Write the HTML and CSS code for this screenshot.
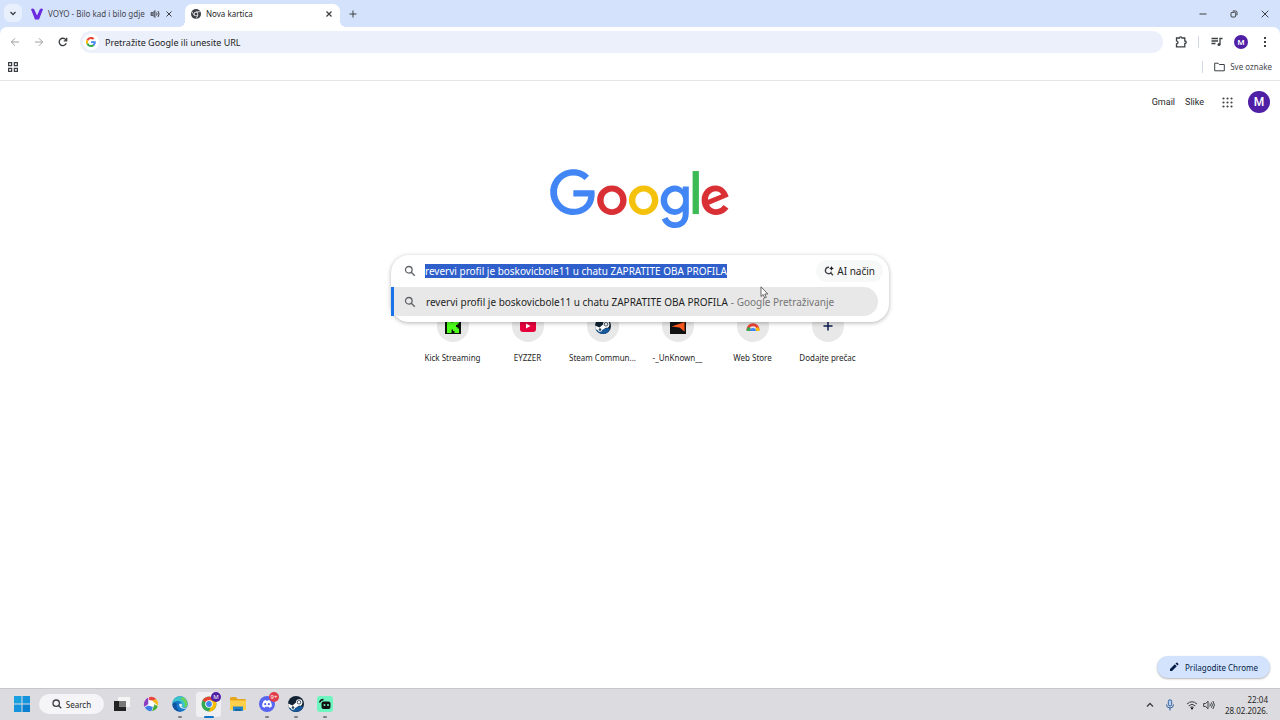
FILE: index.html
```html
<!DOCTYPE html>
<html lang="hr">
<head>
    <meta charset="UTF-8">
    <meta name="viewport" content="width=device-width, initial-scale=1.0">
    <title>Nova kartica</title>
    <link rel="stylesheet" href="styles.css">
</head>
<body>
    <header class="browser">
        <div class="tab-strip">
            <button class="tab-search" aria-label="Pretraži kartice">
                <svg width="8" height="8" viewBox="0 0 8 8"><path d="M1.500 3l2.500 2.500L6.500 3" class="line bold"/></svg>
            </button>
            <div class="tab">
                <svg width="12" height="12" viewBox="0 0 12 12"><path d="M0 1.200Q1.500-.3 3 1l3 6.500L9 1q1.500-1.300 3 .2L8 11.500H4z" fill="#6a2be0"/></svg>
                <span class="tab-title">VOYO - Bilo kad i bilo gdje</span>
                <svg class="tab-sound" width="10" height="10" viewBox="0 0 10 10"><path d="M1 3.500h2L5 1.500v7L3 6.500H1z" fill="#7c8494" stroke="#44474e" stroke-width=".8"/><path d="M6.500 3.500q1.200 1.500 0 3M8 2q2.200 3 0 6" class="line"/></svg>
                <button class="close" aria-label="Zatvori"><svg width="8" height="8" viewBox="0 0 8 8"><path d="M1.500 1.500l5 5M6.500 1.500l-5 5" class="line"/></svg></button>
            </div>
            <div class="tab active">
                <svg width="10" height="10" viewBox="0 0 20 20"><circle cx="10" cy="10" r="10" fill="#3c4043"/><path d="M10 5.500h8M6 12.500L2 5.500M14 12.500l-4 7" stroke="#fff" stroke-width="1.500"/><circle cx="10" cy="10" r="4.500" fill="#fff"/><circle cx="10" cy="10" r="3" fill="#3c4043"/></svg>
                <span class="tab-title">Nova kartica</span>
                <button class="close" aria-label="Zatvori"><svg width="8" height="8" viewBox="0 0 8 8"><path d="M1.500 1.500l5 5M6.500 1.500l-5 5" class="line bold"/></svg></button>
            </div>
            <button class="new-tab" aria-label="Nova kartica"><svg width="8" height="8" viewBox="0 0 8 8"><path d="M4 .5v7M.5 4h7" class="line"/></svg></button>
            <div class="window-buttons">
                <button aria-label="Minimiziraj"><svg width="8" height="8" viewBox="0 0 8 8"><path d="M.5 4h7" class="line"/></svg></button>
                <button aria-label="Vrati"><svg width="8" height="8" viewBox="0 0 8 8"><rect x="1" y="2.300" width="4.700" height="4.700" rx="1" class="line"/><path d="M2.800 1h2.700Q7 1 7 2.500v2.700" class="line"/></svg></button>
                <button aria-label="Zatvori"><svg width="8" height="8" viewBox="0 0 8 8"><path d="M.7 .7l6.600 6.600M7.300 .7L.7 7.300" class="line"/></svg></button>
            </div>
        </div>
        <div class="toolbar">
            <button class="nav muted" aria-label="Natrag"><svg width="10" height="10" viewBox="0 0 10 10"><path d="M9 5H1.500M5 1.300L1.300 5 5 8.700" class="line"/></svg></button>
            <button class="nav muted" aria-label="Naprijed"><svg width="10" height="10" viewBox="0 0 10 10"><path d="M1 5h7.500M5 1.300L8.700 5 5 8.700" class="line"/></svg></button>
            <button class="nav" aria-label="Osvježi"><svg width="10" height="10" viewBox="0 0 10 10"><path d="M8.300 6.300A3.700 3.700 0 1 1 7.800 2.700L8.500 3.500M8.700 .8v3H5.800" class="line bold"/></svg></button>
            <div class="omnibox">
                <span class="g-badge"><svg width="10" height="10" viewBox="0 0 48 48"><path fill="#ea4335" d="M24 9.500c3.500 0 6.700 1.200 9.200 3.600l6.900-6.900C35.900 2.400 30.500 0 24 0 14.600 0 6.500 5.400 2.600 13.200l8 6.200C12.400 13.700 17.700 9.500 24 9.500z"/><path fill="#4285f4" d="M47 24.500c0-1.600-.2-3.100-.4-4.500H24v9h12.900c-.6 3-2.200 5.500-4.700 7.200l7.700 6C44.400 38 47 31.800 47 24.500z"/><path fill="#fbbc05" d="M10.500 28.600a14.500 14.500 0 0 1 0-9.200l-8-6.200a24 24 0 0 0 0 21.600z"/><path fill="#34a853" d="M24 48c6.500 0 11.900-2.100 15.900-5.800l-7.700-6c-2.200 1.500-4.900 2.300-8.200 2.300-6.300 0-11.600-4.200-13.500-9.900l-8 6.200C6.500 42.600 14.600 48 24 48z"/></svg></span>
                <input type="text" aria-label="Adresna traka" placeholder="Pretražite Google ili unesite URL">
            </div>
            <button class="tool extensions" aria-label="Proširenja"><svg width="12" height="12" viewBox="0 0 12 12"><path d="M1.500 2h3q0-1.200 1.200-1.200T7 2h2.800v3q1.400 0 1.400 1.200T9.800 7.500v3.300H1.500V7.900q1.500-.2 1.500-1.500T1.500 4.900z" class="line bold"/></svg></button>
            <span class="divider"></span>
            <button class="tool media" aria-label="Mediji"><svg width="12" height="10" viewBox="0 0 12 10"><path d="M.5 1.500h6.500M.5 4h6.500M.5 6.500h4M9 7.500V1.500h2.500" class="line bold"/><circle cx="8" cy="7.500" r="1.500" fill="#3c4043"/></svg></button>
            <button class="avatar small" aria-label="Profil">M</button>
            <button class="tool menu" aria-label="Izbornik"><svg width="4" height="12" viewBox="0 0 4 12"><circle cx="2" cy="2" r="1"/><circle cx="2" cy="6" r="1"/><circle cx="2" cy="10" r="1"/></svg></button>
        </div>
        <div class="bookmarks">
            <button aria-label="Grupe kartica"><svg width="10" height="10" viewBox="0 0 10 10"><path d="M.6 .6h3v3h-3zM6.400 .6h3v3h-3zM.6 6.400h3v3h-3zM6.400 6.400h3v3h-3z" class="line bold"/></svg></button>
            <span class="divider"></span>
            <button class="all-bookmarks"><svg width="11" height="10" viewBox="0 0 11 10"><path d="M.7 1.200h3.300l1.300 1.300h5v6.300H.7z" class="line"/></svg>Sve oznake</button>
        </div>
    </header>

    <main class="page">
        <nav class="page-nav">
            <a href="#">Gmail</a>
            <a href="#">Slike</a>
            <button class="apps" aria-label="Aplikacije"><svg width="11" height="11" viewBox="0 0 11 11"><path d="M1.500 1.500h.01M5.500 1.500h.01M9.500 1.500h.01M1.500 5.500h.01M5.500 5.500h.01M9.500 5.500h.01M1.500 9.500h.01M5.500 9.500h.01M9.500 9.500h.01" stroke="#444" stroke-width="2.200" stroke-linecap="round"/></svg></button>
            <button class="avatar" aria-label="Google račun">M</button>
        </nav>

        <svg class="logo" width="180" height="61" viewBox="0 0 272 92" role="img" aria-label="Google">
            <path fill="#4285f4" d="M35.290 41.410V32h31.710c.31 1.640.47 3.580.47 5.680 0 7.060-1.930 15.790-8.150 22.010-6.050 6.300-13.780 9.660-24.020 9.660C16.320 69.350.36 53.890.36 34.910.36 15.930 16.320.47 35.300.47c10.500 0 17.980 4.120 23.600 9.490l-6.640 6.640c-4.030-3.780-9.490-6.720-16.970-6.720-13.860 0-24.700 11.170-24.700 25.030 0 13.860 10.840 25.030 24.700 25.030 8.990 0 14.110-3.610 17.390-6.890 2.660-2.660 4.410-6.460 5.100-11.650z"/>
            <path fill="#d93036" d="M115.750 47.180c0 12.770-9.990 22.180-22.250 22.180s-22.250-9.410-22.250-22.180C71.250 34.320 81.240 25 93.500 25s22.250 9.320 22.250 22.180zm-9.740 0c0-7.980-5.790-13.440-12.510-13.440S80.990 39.200 80.990 47.180c0 7.900 5.790 13.440 12.510 13.440s12.510-5.550 12.510-13.440z"/>
            <path fill="#f4c20d" d="M163.750 47.180c0 12.770-9.990 22.180-22.250 22.180s-22.250-9.410-22.250-22.180c0-12.860 9.990-22.180 22.250-22.180s22.250 9.320 22.250 22.180zm-9.740 0c0-7.980-5.790-13.440-12.510-13.440s-12.510 5.460-12.510 13.440c0 7.900 5.790 13.440 12.510 13.440s12.510-5.550 12.510-13.440z"/>
            <path fill="#4285f4" d="M209.750 26.340v39.820c0 16.380-9.660 23.070-21.080 23.070-10.750 0-17.220-7.190-19.660-13.070l8.480-3.530c1.510 3.610 5.210 7.870 11.170 7.870 7.310 0 11.840-4.510 11.840-13v-3.190h-.34c-2.180 2.690-6.380 5.040-11.680 5.040-11.090 0-21.250-9.660-21.250-22.090 0-12.520 10.160-22.260 21.250-22.260 5.290 0 9.490 2.350 11.680 4.960h.34v-3.610h9.250zm-8.560 20.920c0-7.810-5.210-13.520-11.840-13.520-6.720 0-12.350 5.710-12.350 13.520 0 7.730 5.630 13.360 12.350 13.360 6.630 0 11.840-5.630 11.840-13.360z"/>
            <path fill="#3cba54" d="M225 3v65h-9.500V3z"/>
            <path fill="#d93036" d="M262.020 54.480l7.560 5.040c-2.440 3.610-8.320 9.830-18.480 9.830-12.600 0-22.010-9.740-22.010-22.180 0-13.190 9.490-22.180 20.920-22.180 11.510 0 17.140 9.160 18.980 14.110l1.010 2.520-29.650 12.280c2.270 4.450 5.800 6.720 10.750 6.720 4.960 0 8.400-2.440 10.920-6.140zm-23.270-7.980l19.820-8.230c-1.090-2.770-4.370-4.700-8.230-4.700-4.950 0-11.840 4.370-11.590 12.930z"/>
        </svg>

        <form class="search-box">
            <div class="search-row">
                <svg class="lens" width="12" height="12" viewBox="0 0 12 12"><circle cx="4.800" cy="4.800" r="3.300" class="line bold"/><path d="M7.300 7.300l3.500 3.500" class="line bold"/></svg>
                <input type="text" id="query" aria-label="Pretraživanje" autocomplete="off" value="revervi profil je boskovicbole11 u chatu ZAPRATITE OBA PROFILA">
                <button type="button" class="ai-mode"><svg width="10" height="10" viewBox="0 0 10 10"><path d="M5 1.300A3.200 3.200 0 1 0 7.500 5.800M6.300 6.500l2.700 2.700" class="line bold"/><path d="M7.500 0q.3 2 2.300 2.400-2 .4-2.300 2.400-.3-2-2.300-2.400Q7.200 2 7.500 0z" fill="#1f1f1f"/></svg>AI način</button>
            </div>
            <button type="button" class="suggestion">
                <svg class="lens" width="12" height="12" viewBox="0 0 12 12"><circle cx="4.800" cy="4.800" r="3.300" class="line bold"/><path d="M7.300 7.300l3.500 3.500" class="line bold"/></svg>
                <span>revervi profil je boskovicbole11 u chatu ZAPRATITE OBA PROFILA</span>
                <span class="source">- Google Pretraživanje</span>
            </button>
        </form>

        <div class="shortcuts">
            <a href="#"><span class="disc"><svg width="16" height="16" viewBox="0 0 16 16"><path fill="#0a140a" d="M0 0h16v16H0z"/><path fill="#4dff1a" d="M2 1h4.500v3.500H8V3h1.500V1H14v4.500h-1.500V7H11v2h1.500v1.500H14V15H9.500v-2H8v-1.500H6.500V15H2z"/></svg></span>Kick Streaming</a>
            <a href="#"><span class="disc"><svg width="16" height="12" viewBox="0 0 16 12"><rect width="16" height="12" rx="3" fill="#e6003c"/><path fill="#fff" d="M6 3.500v5L10.500 6z"/></svg></span>EYZZER</a>
            <a href="#"><span class="disc"><svg width="16" height="16" viewBox="0 0 16 16"><use href="#steam"/></svg></span>Steam Commun...</a>
            <a href="#"><span class="disc"><svg width="16" height="16" viewBox="0 0 16 16"><path fill="#111" d="M0 0h16v16H0z"/><path fill="#ff5a1f" d="M1.500 8.500L14.500 4v9.500L9.500 9.500z"/></svg></span>-_UnKnown__</a>
            <a href="#"><span class="disc"><svg width="14" height="14" viewBox="0 0 14 14"><path d="M1.800 11a5.200 5.200 0 0 1 10.400 0" fill="none" stroke="#ea4335" stroke-width="3"/><path d="M.5 12a6.500 6.500 0 0 1 1.500-4l3 1.500-1 2.500z" fill="#34a853"/><path d="M13.500 12a6.500 6.500 0 0 0-1.500-4l-2.500 1.500.5 2.500z" fill="#fbbc05"/><path d="M4 12a3 3 0 0 1 6 0z" fill="#4285f4"/></svg></span>Web Store</a>
            <a href="#"><span class="disc"><svg width="10" height="10" viewBox="0 0 10 10"><path d="M5 .5v9M.5 5h9" stroke="#0b1d51" stroke-width="1.500"/></svg></span>Dodajte prečac</a>
        </div>

        <button class="customize"><svg width="10" height="10" viewBox="0 0 10 10"><path fill="#041e49" d="M1 9V7l4.800-4.800 2 2L3 9zM6.500 1.500l.8-.8q.5-.4 1 0l1 1q.4.500 0 1l-.8.800z"/></svg>Prilagodite Chrome</button>

        <svg class="cursor" width="9" height="13" viewBox="0 0 9 13"><path d="M1 .8v9.700l2.200-2L4.700 12l1.600-.7L4.800 8h3z" fill="#fff" stroke="#444" stroke-width=".8"/></svg>
    </main>

    <footer class="taskbar">
        <div class="task-items">
            <button class="task start" aria-label="Start"><svg width="16" height="16" viewBox="0 0 16 16"><path fill="#18a0e0" d="M0 0h7.500v7.500H0z"/><path fill="#1593dc" d="M8.500 0H16v7.500H8.500zM0 8.500h7.500V16H0z"/><path fill="#0b7fd0" d="M8.500 8.500H16V16H8.500z"/></svg></button>
            <button class="task-search"><svg width="10" height="10" viewBox="0 0 10 10"><circle cx="4.200" cy="4.200" r="3.200" class="line bold"/><path d="M6.500 6.500L9.300 9.300" class="line bold"/></svg>Search</button>
            <button class="task" aria-label="Prikaz zadataka"><svg width="16" height="16" viewBox="0 0 16 16"><path fill="#f5f5f5" d="M4 1h12v10H4z"/><path fill="#222" d="M0 5h5v5.500h7V15H0z"/><path fill="#777" d="M5 5h7v5.500H5z"/></svg></button>
            <button class="task" aria-label="Picasa"><svg width="16" height="16" viewBox="0 0 16 16"><circle cx="8" cy="8" r="7" fill="#fff"/><path fill="#8b3fc0" d="M5.300 1.500V8L1.500 11A7.300 7.300 0 0 1 5.300 1.500z"/><path fill="#e8453c" d="M6 1.200a7.300 7.300 0 0 1 7 1.600L12 5 6 4z"/><path fill="#f7b61c" d="M13.500 3.200a7.300 7.300 0 0 1 1.500 6.500L9 4.500z"/><path fill="#48ac3b" d="M14.800 10.300A7.300 7.300 0 0 1 9 15.200l2.500-7z"/><path fill="#3f7ee8" d="M8.300 15.300a7.300 7.300 0 0 1-6.500-3.700L5 9.500l5 1.500z"/></svg></button>
            <button class="task open" aria-label="Edge"><svg width="16" height="16" viewBox="0 0 16 16"><circle cx="8" cy="8" r="7.700" fill="#1679cc"/><path fill="#3bc4c9" d="M.5 7.500a7.500 7.500 0 0 1 15 .5c0 3-2.500 4-5 3.500-1.500-.3-1-1.300-.5-2C10.500 7 8.500 5 5.500 5 3 5 1.300 6.200.5 7.500z"/><path fill="#67d45b" d="M10 1a7.500 7.500 0 0 1 5.500 7c0 2.500-1.500 3.500-3.500 3.600C14 8 12 4.500 8.500 3z"/><path fill="#1253a0" d="M5 8c-1.500 3 .5 6.500 4.500 7.300C4 16.500.5 12 .5 8.500 1.500 6.500 4 6 5 8z"/><path fill="#e9f2f8" d="M7 8.500q1.500-2 3 0c.3 1-1 1.500 0 2.700 1.500 1 3.500.8 5 .2-2.500 3-7.500 1-8-2.900z"/></svg></button>
            <button class="task open current" aria-label="Chrome"><svg width="16" height="16" viewBox="0 0 16 16"><circle cx="8" cy="8" r="7.500" fill="#34a853"/><path fill="#ea4335" d="M8 8L1.500 4.300A7.500 7.500 0 0 1 14.500 4.500H8z"/><path fill="#fbbc05" d="M8 4.500h6.500A7.500 7.500 0 0 1 7.600 15.500L11 9.500z"/><circle cx="8" cy="8" r="3.800" fill="#fff"/><circle cx="8" cy="8" r="2.900" fill="#4285f4"/></svg><span class="badge">M</span></button>
            <button class="task" aria-label="Datoteke"><svg width="16" height="16" viewBox="0 0 16 16"><path fill="#e5a51d" d="M0 2.500Q0 1 1.500 1H6l1.500 2H15l1 1v5H0z"/><path fill="#fcd04a" d="M0 4.500h16V14H0z"/><path fill="#2483c9" d="M3 10.500h10V15H3z"/><path fill="#1668a5" d="M5 13h6v2H5z"/></svg></button>
            <button class="task open" aria-label="Discord"><svg width="16" height="16" viewBox="0 0 16 16"><circle cx="8" cy="8" r="8" fill="#5865f2"/><path fill="#fff" d="M4.700 4.700L6.800 4l.4.700h1.600l.4-.7 2.100.7Q13 7.500 12.800 10.500q-1 .9-2.500 1.200l-.6-1H6.300l-.6 1q-1.500-.3-2.500-1.200Q3 7.500 4.700 4.700z"/><circle cx="6.200" cy="8.200" r="1.100" fill="#5865f2"/><circle cx="9.800" cy="8.200" r="1.100" fill="#5865f2"/></svg><span class="badge alert">9+</span></button>
            <button class="task open" aria-label="Steam"><svg width="16" height="16" viewBox="0 0 16 16"><g id="steam"><circle cx="8" cy="8" r="8" fill="#123"/><path fill="#16599c" d="M.8 11.500l4 .5 8-2 2.500 1A8 8 0 0 1 .8 11.500z"/><path fill="#fff" d="M0 7.500l4.500 2L8 6.500a3.200 3.200 0 1 1 3 3.200L7.200 12a2.300 2.300 0 0 1-4.400.3L.6 11z"/><circle cx="11" cy="6.300" r="2.100" fill="#123"/><circle cx="11" cy="6.300" r="1.400" fill="#fff"/><circle cx="5" cy="11.600" r="1.300" fill="#345"/></g></svg></button>
            <button class="task open" aria-label="Kamera"><svg width="16" height="16" viewBox="0 0 16 16"><rect width="16" height="16" rx="3" fill="#6ff5c0"/><rect x="4.500" y="5.500" width="9" height="7.500" rx="2" fill="#111"/><path d="M2.500 6.500Q3.500 3.500 6.500 3.500" fill="none" stroke="#111" stroke-width="1.300"/><circle cx="7.500" cy="9" r="1" fill="#6ff5c0"/><circle cx="11" cy="9" r="1" fill="#6ff5c0"/></svg></button>
        </div>
        <div class="tray">
            <button aria-label="Skrivene ikone"><svg width="8" height="8" viewBox="0 0 8 8"><path d="M1 5.500l3-3 3 3" class="line bold"/></svg></button>
            <button class="mic" aria-label="Mikrofon"><svg width="10" height="12" viewBox="0 0 10 12"><rect x="3.300" y=".8" width="3.400" height="6.200" rx="1.700" fill="#b9d1ee" stroke="#2c5f9e"/><path d="M1.500 5.500q0 3.500 3.500 3.500t3.500-3.500M5 9v2.500" fill="none" stroke="#2c5f9e"/></svg></button>
            <button aria-label="Mreža"><svg width="12" height="10" viewBox="0 0 12 10"><path d="M1 4q5-4.500 10 0M2.700 5.800q3.300-3 6.600 0M4.300 7.500q1.700-1.500 3.400 0" class="line"/><circle cx="6" cy="8.500" r="1"/></svg></button>
            <button aria-label="Zvuk"><svg width="12" height="10" viewBox="0 0 12 10"><path d="M.7 3.500h2L5 1.200v7.600L2.700 6.500h-2z M6.800 3.500q1.200 1.500 0 3M8.300 2.300q2.200 2.700 0 5.400M9.900 1q3 4 0 8" class="line"/></svg></button>
            <time class="clock" datetime="2026-02-28T22:04">22:04<br>28.02.2026.</time>
        </div>
    </footer>

    <script>
        window.onload = function() {
            const query = document.getElementById('query');
            query.focus();
            query.select();
        }
    </script>
</body>
</html>
```

FILE: styles.css
```css
* {
    box-sizing: border-box;
}
body {
    margin: 0;
    min-height: 100vh;
    display: flex;
    flex-direction: column;
    font-family: "Noto Sans", "Open Sans", sans-serif;
    font-size: 8px;
    color: #1f1f1f;
    background-color: white;
}
button, input {
    font: inherit;
    color: inherit;
    background: none;
    border: none;
    padding: 0;
    outline: none;
}
button {
    display: flex;
    align-items: center;
    justify-content: center;
    cursor: pointer;
}
a {
    color: inherit;
    text-decoration: none;
}
svg {
    flex-shrink: 0;
}
.line {
    fill: none;
    stroke: #3c4043;
    stroke-width: 1;
}
.line.bold {
    stroke-width: 1.3;
}
.lens .line {
    stroke: #5f6368;
}

/* browser window */
.browser {
    background-color: #d5e2fb;
}
.tab-strip {
    display: flex;
    height: 27px;
    padding-left: 4px;
}
.tab-search {
    width: 18px;
    height: 18px;
    margin-top: 4px;
    border-radius: 6px;
    background-color: #e8f0fd;
}
.tab {
    position: relative;
    display: flex;
    align-items: center;
    width: 154px;
    margin-left: 4px;
    padding: 0 6px 0 5px;
    gap: 5px;
    color: #44474e;
}
.tab-title {
    white-space: nowrap;
}
.tab .close {
    width: 10px;
    height: 10px;
    margin-left: auto;
}
.tab.active {
    width: 155px;
    margin: 4px 0 0 5px;
    padding-bottom: 4px;
    padding-left: 6px;
    border-radius: 7px 7px 0 0;
    color: #1f1f1f;
    background-color: white;
}
/* curved feet of the active tab */
.tab.active::before, .tab.active::after {
    content: "";
    position: absolute;
    bottom: 0;
    width: 6px;
    height: 6px;
}
.tab.active::before {
    left: -6px;
    background: radial-gradient(circle at 0 0, transparent 6px, white 6px);
}
.tab.active::after {
    right: -6px;
    background: radial-gradient(circle at 100% 0, transparent 6px, white 6px);
}
.new-tab {
    width: 26px;
}
.window-buttons {
    display: flex;
    margin-left: auto;
}
.window-buttons button {
    width: 31px;
}
.toolbar {
    display: flex;
    align-items: center;
    height: 30px;
    padding: 0 8px 0 3px;
    border-radius: 7px 7px 0 0;
    background-color: white;
}
.nav {
    width: 24px;
    height: 24px;
}
.nav.muted {
    opacity: 0.5;
}
.omnibox {
    flex: 1;
    display: flex;
    align-items: center;
    gap: 6px;
    height: 22px;
    margin-left: 5px;
    padding-left: 3px;
    border-radius: 11px;
    background-color: #ecf0fa;
}
.omnibox input {
    flex: 1;
    font-size: 9px;
}
.omnibox input::placeholder {
    color: #1f1f1f;
    opacity: 1;
}
.g-badge {
    display: flex;
    align-items: center;
    justify-content: center;
    width: 16px;
    height: 16px;
    border-radius: 50%;
    background-color: white;
}
.divider {
    width: 1px;
    height: 12px;
    background-color: #d0d7e5;
}
.extensions {
    margin: 0 11px 0 12px;
}
.media {
    margin-left: 12px;
}
.menu {
    width: 14px;
    margin-left: 10px;
}
.avatar {
    width: 22px;
    height: 22px;
    border-radius: 50%;
    color: white;
    background-color: #4f1fa5;
    font-family: Roboto, sans-serif;
    font-size: 12px;
    font-weight: 500;
}
.avatar.small {
    width: 14px;
    height: 14px;
    margin-left: 11px;
    font-size: 8px;
}
.bookmarks {
    display: flex;
    align-items: center;
    height: 24px;
    padding: 0 8px 4px 8px;
    border-bottom: 1px solid #e6e6e6;
    background-color: white;
}
.bookmarks .divider {
    margin-left: auto;
}
.all-bookmarks {
    gap: 5px;
    margin-left: 11px;
    color: #44474e;
}

/* new tab page */
.page {
    flex: 1;
    position: relative;
    display: flex;
    flex-direction: column;
    align-items: center;
}
.page-nav {
    align-self: flex-end;
    display: flex;
    align-items: center;
    height: 22px;
    margin: 10px 10px 0 0;
    gap: 10px;
    font-family: Roboto, "Liberation Sans", sans-serif;
    font-size: 9px;
}
.apps {
    width: 22px;
    margin-left: 2px;
}
.logo {
    margin-top: 56px;
}
.search-box {
    position: relative;
    z-index: 1;
    width: 498px;
    margin-top: 25px;
    padding-bottom: 6px;
    border-radius: 18px;
    background-color: white;
    box-shadow: 0 1px 4px rgba(0, 0, 0, 0.3);
    font-size: 10px;
}
.search-row {
    display: flex;
    align-items: center;
    height: 32px;
    padding: 0 6px 0 13px;
    gap: 9px;
}
.search-row input {
    flex: 1;
}
.search-row input::selection {
    color: white;
    background-color: #2f5fcb;
}
.ai-mode {
    gap: 3px;
    height: 22px;
    padding: 0 8px;
    border-radius: 11px;
    background-color: #f7f8f8;
}
.suggestion {
    justify-content: flex-start;
    width: 487px;
    height: 29px;
    padding-left: 10px;
    border-left: 3px solid #1a73e8;
    border-radius: 0 15px 15px 0;
    background-color: #e8e8e8;
    white-space: nowrap;
}
.suggestion svg {
    margin-right: 10px;
}
.source {
    margin-left: 3px;
    color: #757575;
}
.shortcuts {
    display: flex;
    margin-top: -12px;
}
.shortcuts a {
    display: flex;
    flex-direction: column;
    align-items: center;
    gap: 10px;
    width: 75px;
    white-space: nowrap;
}
.disc {
    display: flex;
    align-items: center;
    justify-content: center;
    width: 32px;
    height: 32px;
    border-radius: 50%;
    background-color: #e8e8e8;
}
.customize {
    position: absolute;
    right: 10px;
    bottom: 10px;
    gap: 6px;
    height: 22px;
    padding: 0 12px;
    border-radius: 11px;
    background-color: #d3e3fd;
    box-shadow: 0 1px 2px rgba(0, 0, 0, 0.3);
    color: #041e49;
}
.cursor {
    position: absolute;
    z-index: 2;
    left: calc(50% + 120px);
    top: 205px;
}

/* taskbar */
.taskbar {
    display: flex;
    justify-content: space-between;
    height: 32px;
    padding: 0 12px 0 9px;
    border-top: 1px solid #c8c8cb;
    background-color: #dcdce0;
}
.task-items, .tray {
    display: flex;
    align-items: center;
}
.task-items {
    gap: 4px;
    padding-bottom: 1px;
}
.task {
    position: relative;
    width: 25px;
    height: 25px;
    border-radius: 3px;
}
.task.current {
    background-color: #f0f0f3;
}
.task.open::after {
    content: "";
    position: absolute;
    bottom: -1px;
    width: 4px;
    height: 2px;
    border-radius: 1px;
    background-color: #808084;
}
.task.current::after {
    width: 10px;
    background-color: #0f74c8;
}
.task-search {
    gap: 4px;
    width: 65px;
    height: 20px;
    margin: 0 1px;
    border-radius: 10px;
    background-color: #f5f5f7;
}
.badge {
    position: absolute;
    top: 0;
    right: 0;
    width: 10px;
    height: 10px;
    border-radius: 50%;
    background-color: #4f1fa5;
    color: white;
    font-size: 6px;
    line-height: 10px;
}
.badge.alert {
    background-color: #e03e4c;
}
.tray {
    gap: 5px;
}
.tray .mic {
    margin: 0 6px;
}
.clock {
    margin-left: 5px;
    line-height: 11px;
    text-align: right;
}
```
